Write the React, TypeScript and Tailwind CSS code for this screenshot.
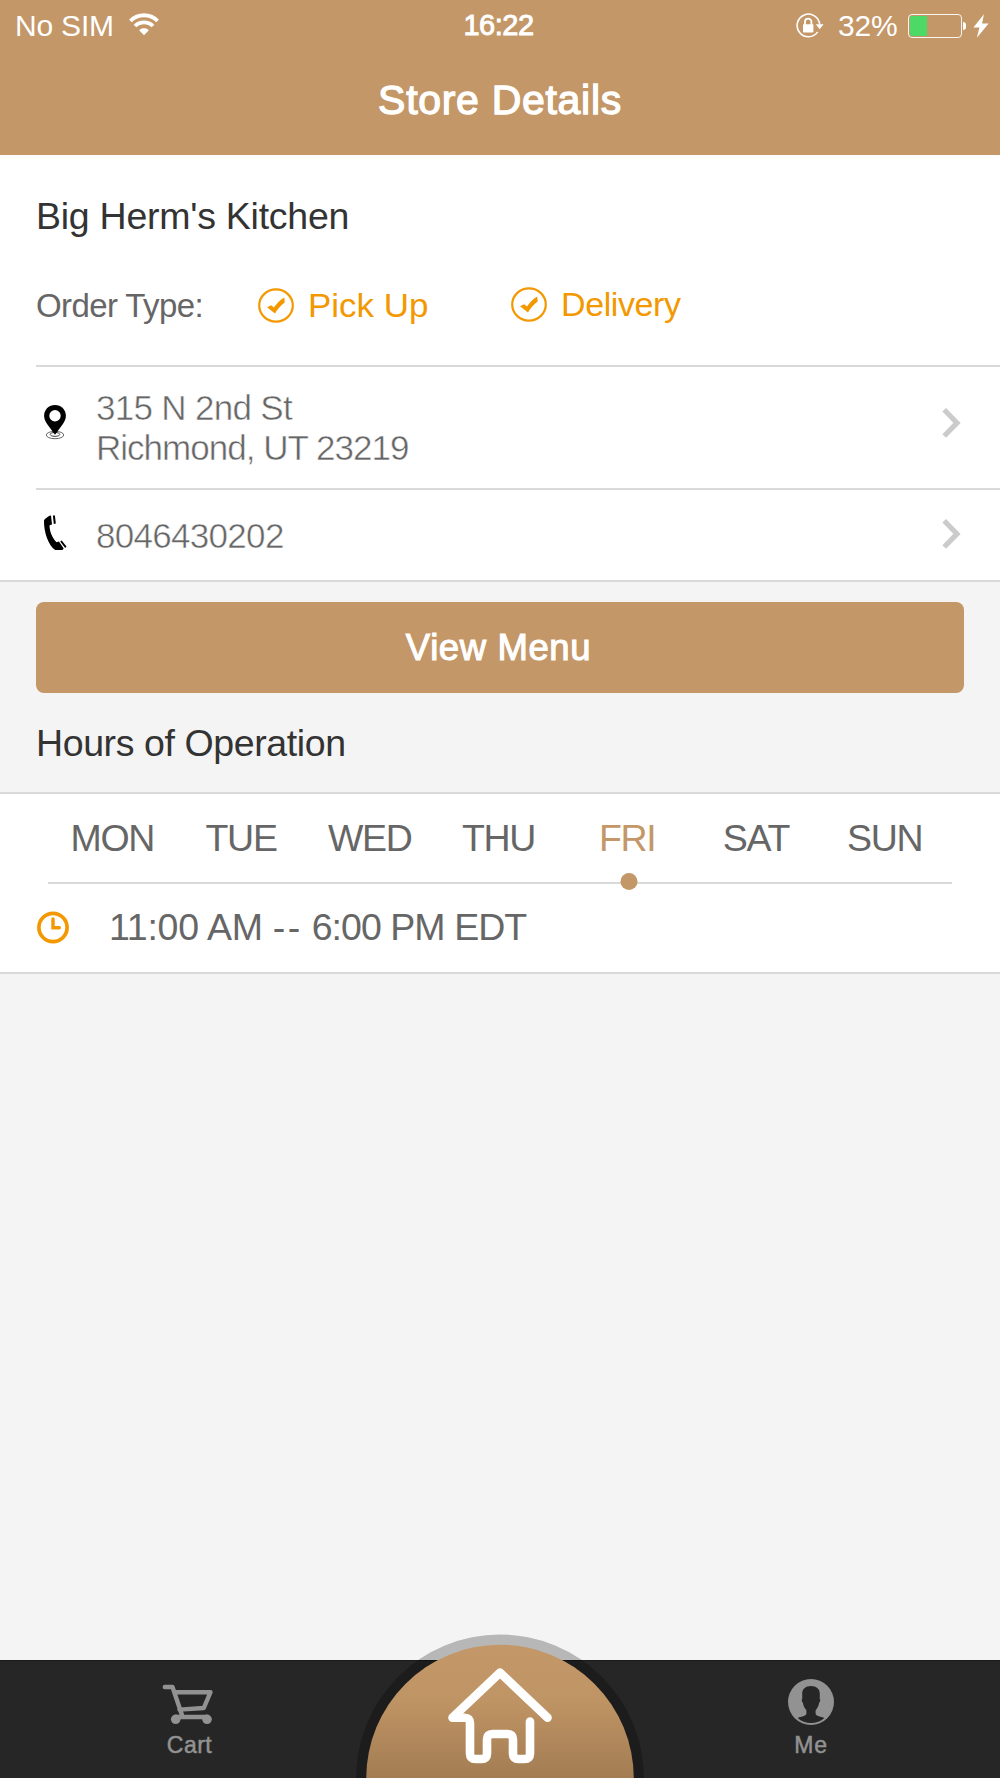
import React, { useState } from "react";

const hours = [
  { day: "MON", open: "11:00 AM", close: "6:00 PM EDT" },
  { day: "TUE", open: "11:00 AM", close: "6:00 PM EDT" },
  { day: "WED", open: "11:00 AM", close: "6:00 PM EDT" },
  { day: "THU", open: "11:00 AM", close: "6:00 PM EDT" },
  { day: "FRI", open: "11:00 AM", close: "6:00 PM EDT" },
  { day: "SAT", open: "11:00 AM", close: "6:00 PM EDT" },
  { day: "SUN", open: "11:00 AM", close: "6:00 PM EDT" },
];

function WifiIcon() {
  return (
    <svg width="30" height="23" viewBox="0 0 30 23" fill="none" stroke="#fff" strokeWidth="3.8">
      <path d="M1.4 7.8C9 .4 21 .4 28.6 7.8" />
      <path d="M6 13c5-4.9 13-4.9 18 0" />
      <path d="M10.2 17.2c2.7-2.6 6.9-2.6 9.6 0L15 22.3z" fill="#fff" stroke="none" />
    </svg>
  );
}

function RotationLockIcon() {
  return (
    <svg width="28" height="26" viewBox="0 0 28 26" fill="none" stroke="#fff" strokeWidth="1.6">
      <path d="M21.7 18.9A11.3 11.3 0 1 1 23.7 11.5" />
      <path d="M19.8 11.2h7.8l-3.9 5z" fill="#fff" stroke="none" />
      <rect x="7" y="11.2" width="10.4" height="8.3" rx="0.8" fill="#fff" stroke="none" />
      <path d="M9 12V8.8a3.2 3.2 0 0 1 6.4 0V12" strokeWidth="1.8" />
    </svg>
  );
}

function CheckCircle() {
  return (
    <svg width="36" height="35" viewBox="0 0 36 35" fill="none">
      <ellipse cx="18" cy="17.5" rx="16.8" ry="16.1" stroke="#f39800" strokeWidth="2.2" />
      <path d="M9 19.3l4.2-2 2.7 2.2c2.7-4.1 6-7.5 10.4-10.1l.4 5c-4.3 3.3-7.4 6.700-9.700 11.200z" fill="#f39800" />
    </svg>
  );
}

function PinIcon() {
  return (
    <svg width="24" height="35" viewBox="0 0 24 35" fill="none">
      <ellipse cx="12" cy="30" rx="8.7" ry="3.7" stroke="#666" strokeWidth="1" />
      <ellipse cx="12" cy="29.4" rx="4.8" ry="2" stroke="#444" strokeWidth="1" />
      <path
        d="M12 0C5.8 0 1.1 4.7 1.1 10.7c0 3 1.3 5.7 3 8.3L12 29.8 19.9 19c1.7-2.6 3-5.3 3-8.3C22.9 4.7 18.2 0 12 0zm0 5.1a5.7 5.7 0 1 1 0 11.4 5.7 5.7 0 0 1 0-11.4z"
        fill="#000"
        fillRule="evenodd"
      />
    </svg>
  );
}

function PhoneIcon() {
  return (
    <svg width="24" height="36" viewBox="0 0 24 36" fill="#000">
      <path d="M6.6.8l1.4-.4 1 9-2.4.9c-.3 5.8 2.9 13.3 7 17l2.3-.9 4.8 7.2-1.3 1.4h-7.2C5.5 31 .7 16.7 1 5.8c0-1.6 3.6-3.7 5.6-5z" />
      <path d="M9.9.4h2l.9 8-2 .7zM17.200 26.400l1.500-1 4.800 6.200-1.300 1.500z" />
    </svg>
  );
}

function Chevron() {
  return (
    <svg width="20" height="30" viewBox="0 0 20 30" fill="none" stroke="#cbcbcb" strokeWidth="5.2">
      <path d="M2.2 1.8L15 14.9 2.2 28" />
    </svg>
  );
}

function ClockIcon() {
  return (
    <svg width="33" height="33" viewBox="0 0 33 33" fill="none" stroke="#f39800">
      <circle cx="16" cy="16.5" r="14.1" strokeWidth="3.7" />
      <path d="M16 8v8.7h6.3" strokeWidth="3.4" strokeLinecap="round" />
    </svg>
  );
}

function CartIcon() {
  return (
    <svg
      width="52"
      height="42"
      viewBox="0 0 52 42"
      fill="none"
      stroke="#929292"
      strokeWidth="4.4"
      strokeLinecap="round"
      strokeLinejoin="round"
    >
      <path d="M3.800 3h7.700l9.800 29" />
      <path d="M14.500 8.200H49.500L42.800 24 18.500 25.600" />
      <path d="M14.700 33H46" />
      <circle cx="14.700" cy="35.300" r="4.800" fill="#929292" stroke="none" />
      <circle cx="46" cy="35.300" r="4.800" fill="#929292" stroke="none" />
    </svg>
  );
}

function AvatarIcon() {
  return (
    <svg width="46" height="46" viewBox="0 0 46 46">
      <circle cx="23" cy="23" r="23" fill="#929292" />
      <path
        d="M23 7c-5.500 0-9 3-8.800 8.200l.1 4.600c-1 .5-.5 3.400.6 4 .4 3 1.500 5.200 3.500 7.500v3.400c-.7 2.700-4.500 2.400-8.700 4.200 3.300 3.200 8.300 5.200 13.300 5.200s10-2 13.300-5.200c-4.200-1.800-8-1.500-8.700-4.200v-3.400c2-2.300 3.100-4.500 3.500-7.500 1.100-.6 1.600-3.500.6-4l.1-4.600C32 10 28.500 7 23 7z"
        fill="#262626"
      />
    </svg>
  );
}

function HomeButton() {
  return (
    <svg width="288" height="144" viewBox="0 0 288 144" fill="none" className="block">
      <defs>
        <linearGradient id="homeFill" x1="0" y1="0" x2="0" y2="1">
          <stop offset="0" stopColor="#c39767" />
          <stop offset="0.2" stopColor="#c09565" />
          <stop offset="0.5" stopColor="#a37c53" />
        </linearGradient>
      </defs>
      <circle cx="144" cy="144.5" r="144" fill="#000" fillOpacity="0.25" />
      <circle cx="144" cy="144.5" r="133.8" fill="url(#homeFill)" />
      <path
        d="M191.5 83.7L144 38.7 96.500 83.700h12q5.500 0 5.500 5.500v30.300q0 5.500 5.500 5.500h6q5.500 0 5.500-5.500v-14q0-5.500 5.500-5.500h15q5.500 0 5.500 5.500v14q0 5.500 5.500 5.500h6q5.500 0 5.500-5.500V87.500"
        stroke="#fff"
        strokeWidth="8.6"
        strokeLinecap="round"
        strokeLinejoin="round"
      />
    </svg>
  );
}

export default function App() {
  const [selected, setSelected] = useState(4);

  return (
    <div className="flex h-[1778px] w-[1000px] flex-col overflow-hidden bg-[#f4f4f4] font-['Liberation_Sans',Arial,sans-serif] whitespace-nowrap">
      {/* Status bar and title */}
      <header className="h-[154.5px] shrink-0 bg-[#c39767] text-white">
        <div className="grid h-[51px] grid-cols-3 items-center text-[30px] leading-none">
          <div className="flex items-center pl-[15px]">
            <span className="tracking-[-0.2px]">No SIM</span>
            <span className="ml-[15px] -mt-[3px]">
              <WifiIcon />
            </span>
          </div>
          <div className="pr-[3px] text-center text-[29px] tracking-[-0.5px] [-webkit-text-stroke:0.9px_white]">16:22</div>
          <div className="flex items-center justify-end pr-[11px]">
            <RotationLockIcon />
            <span className="ml-[14px] tracking-[-0.2px]">32%</span>
            <span className="ml-[10px] flex h-6 w-[54px] rounded-[4px] border border-white/90 p-px">
              <span className="h-full w-[17px] rounded-l-[2px] bg-[#4cd964]" />
            </span>
            <span className="ml-[1.5px] h-2 w-[3px] rounded-r-full bg-white" />
            <svg width="16" height="24" viewBox="0 0 14 24" preserveAspectRatio="none" fill="#fff" className="ml-[7px]">
              <path d="M9.6.3L.3 13.4h5.3L3.4 23.7 13.7 9.500H7.900z" />
            </svg>
          </div>
        </div>
        <h1 className="flex h-[100px] items-center justify-center text-[41px] tracking-[0.7px] [-webkit-text-stroke:1.3px_white]">
          Store Details
        </h1>
      </header>

      {/* Store info */}
      <section className="h-[427.5px] shrink-0 border-b-2 border-[#d9d9d9] bg-white pl-9 text-[#666]">
        <h2 className="flex h-[123px] items-center text-[37.5px] tracking-[-0.25px] text-[#333]">Big Herm's Kitchen</h2>
        <div className="flex h-[89.5px] items-start border-b-2 border-[#d9d9d9] text-[33px] leading-[36px]">
          <span className="mt-[10px] w-[222px] tracking-[-0.6px]">Order Type:</span>
          <div className="mt-[10px] flex w-[253px] items-center text-[#f39800]">
            <CheckCircle />
            <span className="ml-[14px] origin-left scale-x-[1.06]">Pick Up</span>
          </div>
          <div className="mt-[9px] flex items-center text-[#f39800]">
            <CheckCircle />
            <span className="ml-[14px] origin-left scale-x-[1.03] tracking-[-0.4px]">Delivery</span>
          </div>
        </div>
        <div className="flex h-[123px] items-center border-b-2 border-[#d9d9d9] pr-[38px] text-[35px] leading-[39.5px] [-webkit-text-stroke:0.5px_white]">
          <span className="-mt-[10px] ml-[6.5px] w-[53.5px]">
            <PinIcon />
          </span>
          <address className="flex-1 not-italic">
            <div className="tracking-[-0.7px]">315 N 2nd St</div>
            <div className="tracking-[-0.98px]">Richmond, UT 23219</div>
          </address>
          <span className="-mt-[9px]">
            <Chevron />
          </span>
        </div>
        <div className="flex h-[90px] items-center pr-[38px] text-[35px] [-webkit-text-stroke:0.5px_white]">
          <span className="-mt-[5px] ml-[6.5px] w-[53.5px]">
            <PhoneIcon />
          </span>
          <span className="mt-[3px] flex-1 tracking-[-0.7px]">8046430202</span>
          <span className="-mt-[3px]">
            <Chevron />
          </span>
        </div>
      </section>

      <div className="h-[210px] shrink-0 px-9 pt-[19.5px]">
        <button className="flex h-[91.5px] w-full items-center justify-center rounded-lg bg-[#c39767] pt-[3px] pr-[3px] text-[36.5px] tracking-[0.6px] text-white [-webkit-text-stroke:1.1px_white]">
          View Menu
        </button>
        <h2 className="flex h-[101px] items-center text-[37.5px] tracking-[-0.4px] text-[#333]">Hours of Operation</h2>
      </div>

      {/* Opening hours */}
      <section className="h-[181.5px] shrink-0 border-y-[2.5px] border-[#d9d9d9] bg-white text-[#666]">
        <div className="mx-12 grid h-[90px] grid-cols-7 border-b-2 border-[#d9d9d9] pr-[3px]">
          {hours.map(({ day }, i) => (
            <button
              key={day}
              onClick={() => setSelected(i)}
              className={`relative flex h-[88px] items-center justify-center pt-px text-[37.5px] tracking-[-1.3px] ${
                i === selected ? "text-[#c39767]" : ""
              }`}
            >
              {day}
              {i === selected && (
                <span className="absolute -bottom-[8px] left-1/2 ml-[2px] size-[17px] -translate-x-1/2 rounded-full bg-[#c39767]" />
              )}
            </button>
          ))}
        </div>
        <div className="flex h-[87px] items-center pl-[37px] text-[37.5px] tracking-[-0.95px]">
          <ClockIcon />
          <span className="ml-[39px]">
            <span className="tracking-[-0.25px]">{hours[selected].open}</span>
            <span className="mr-[9px] ml-[10px] tracking-[2.5px]">--</span>
            {hours[selected].close}
          </span>
        </div>
      </section>

      <main className="flex-1" />

      {/* Bottom tab bar */}
      <nav className="relative flex h-[118.5px] shrink-0 justify-between border-t border-[#1a1a1a] bg-[#262626] text-[23px] leading-[24px] text-[#929292] [-webkit-text-stroke:0.5px_#929292]">
        <button className="flex w-[378px] flex-col items-center pt-[23px]">
          <span className="mr-[4px]">
            <CartIcon />
          </span>
          <span className="mt-[7px] ml-px tracking-[0.5px]">Cart</span>
        </button>
        <button className="flex w-[378px] flex-col items-center pt-[18px]">
          <AvatarIcon />
          <span className="mt-[8px] tracking-[0.8px]">Me</span>
        </button>
        <div className="absolute bottom-0 left-1/2 -translate-x-1/2">
          <HomeButton />
        </div>
      </nav>
    </div>
  );
}
